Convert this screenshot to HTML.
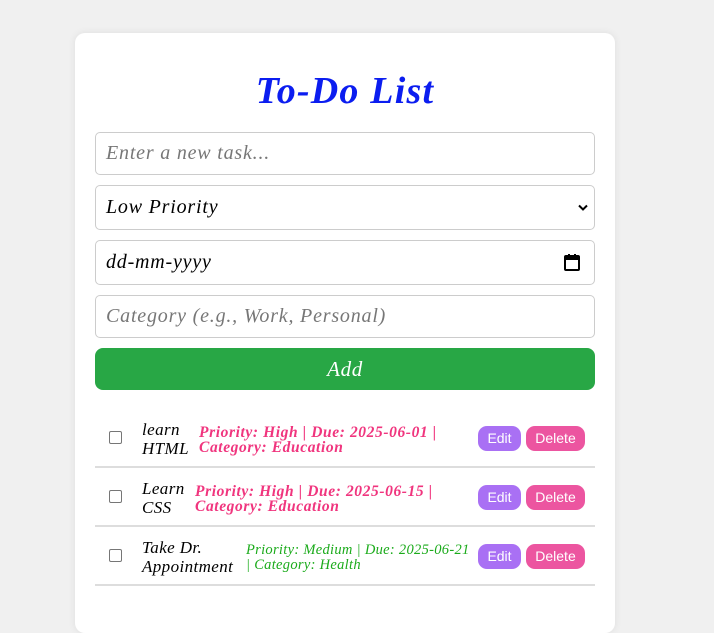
<!DOCTYPE html>
<html><head><style>
*{box-sizing:border-box;margin:0;padding:0}
body{width:714px;height:614px;background:#f0f0f0;font-family:"Liberation Serif",serif;font-style:italic;position:relative;overflow:hidden}
.card{position:absolute;left:75px;top:33px;width:540px;height:600px;background:#fff;border-radius:10px;box-shadow:0 0 8px rgba(0,0,0,.08)}
h1{position:absolute;left:0;width:540px;top:36px;text-align:center;color:#0b1df0;font-size:38px;letter-spacing:1.2px;font-weight:bold;line-height:44px}
.f{position:absolute;left:20px;width:500px;border:1px solid #ccc;border-radius:5px;font-size:20px;letter-spacing:0.8px;padding-left:10px;display:flex;align-items:center;color:#000}
.ph{color:#777}
.btn{position:absolute;left:20px;width:500px;top:315px;height:42px;background:#28a745;border-radius:8px;color:#fff;font-size:21px;letter-spacing:0.6px;text-align:center;line-height:42px}
.row{position:absolute;left:20px;width:500px;height:59px;border-bottom:2px solid #ddd}
.cb{position:absolute;left:14px;width:13px;height:13px;border:1px solid #767676;border-radius:2px;top:22px}
.name{position:absolute;left:47px;font-size:17px;letter-spacing:0.4px;line-height:19px;color:#000}
.meta{position:absolute;font-size:15.5px;letter-spacing:0.6px;line-height:15px;font-weight:bold;white-space:nowrap}
.pink{color:#f0357e}.green{color:#1bab1b;font-weight:normal;font-size:14.5px;letter-spacing:0.3px}
.e,.d{position:absolute;top:17px;height:25px;border-radius:9px;color:#fff;font-family:"Liberation Sans",sans-serif;font-style:normal;font-size:14px;line-height:25px;text-align:center}
.e{left:383px;width:43px;background:#a970f4}
.d{left:431px;width:59px;background:#ec55a0}
</style></head><body>
<div class="card">
<h1>To-Do List</h1>
<div class="f ph" style="top:99px;height:43px">Enter a new task...</div>
<div class="f" style="top:152px;height:45px">Low Priority<svg style="position:absolute;right:6px;top:18px" width="10" height="8" viewBox="0 0 10 8"><path d="M1 1.5L5 5.5L9 1.5" stroke="#000" stroke-width="2" fill="none"/></svg></div>
<div class="f" style="top:207px;height:45px">dd-mm-yyyy<svg style="position:absolute;right:14px;top:13px" width="16" height="17" viewBox="0 0 16 17"><rect x="1" y="2" width="14" height="14" rx="1" fill="none" stroke="#000" stroke-width="2"/><rect x="1" y="2" width="14" height="4" fill="#000"/><rect x="4" y="0" width="2" height="3" fill="#000"/><rect x="10" y="0" width="2" height="3" fill="#000"/></svg></div>
<div class="f ph" style="top:262px;height:43px">Category (e.g., Work, Personal)</div>
<div class="btn">Add</div>
<div class="row" style="top:376px"><div class="cb"></div><div class="name" style="top:11px">learn<br>HTML</div><div class="meta pink" style="left:104px;top:16px">Priority: High | Due: 2025-06-01 |<br>Category: Education</div><div class="e">Edit</div><div class="d">Delete</div></div>
<div class="row" style="top:435px"><div class="cb"></div><div class="name" style="top:11px">Learn<br>CSS</div><div class="meta pink" style="left:100px;top:16px">Priority: High | Due: 2025-06-15 |<br>Category: Education</div><div class="e">Edit</div><div class="d">Delete</div></div>
<div class="row" style="top:494px"><div class="cb"></div><div class="name" style="top:11px">Take Dr.<br>Appointment</div><div class="meta green" style="left:151px;top:16px">Priority: Medium | Due: 2025-06-21<br>| Category: Health</div><div class="e">Edit</div><div class="d">Delete</div></div>
</div>
</body></html>
